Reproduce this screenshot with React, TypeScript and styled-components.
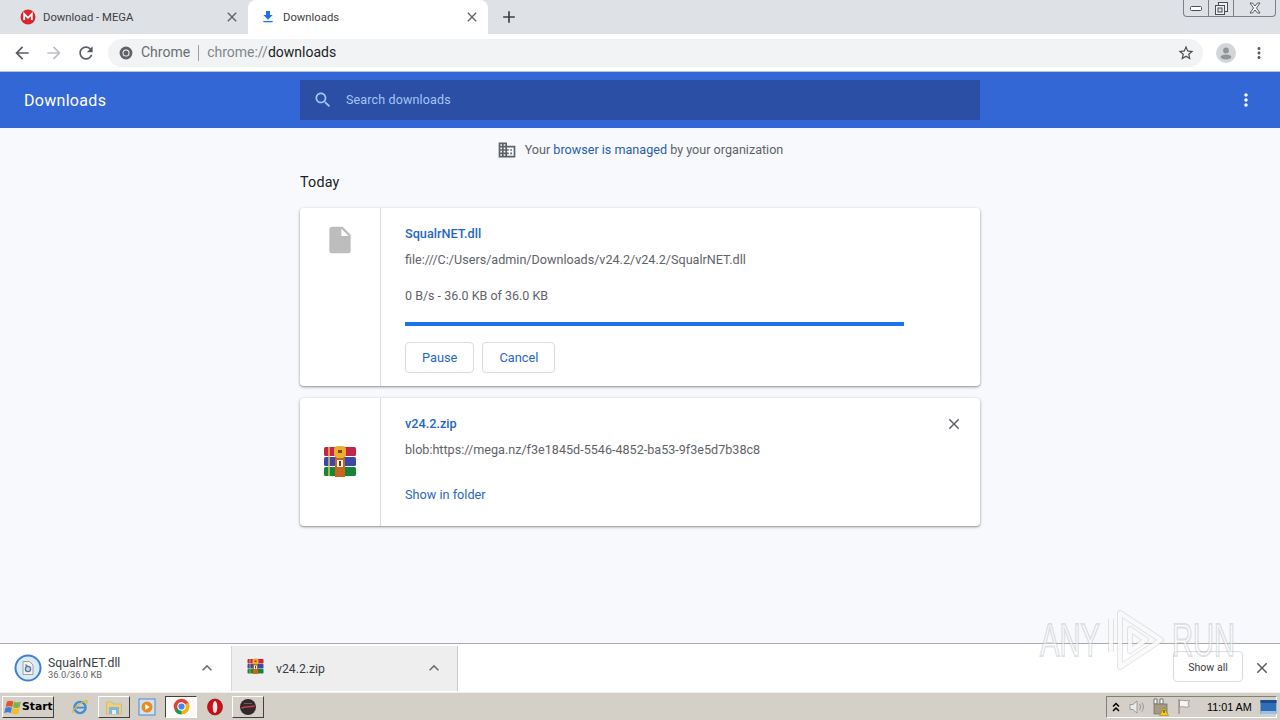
import React from "react";
import styled, { createGlobalStyle } from "styled-components";

const GlobalStyle = createGlobalStyle`
  html, body {
    margin: 0;
    padding: 0;
    width: 1280px;
    height: 720px;
    overflow: hidden;
    font-family: Roboto, "Liberation Sans", sans-serif;
  }
  * { box-sizing: border-box; }
`;

const Page = styled.div`
  position: relative;
  width: 1280px;
  height: 720px;
  display: flex;
  flex-direction: column;
  background: #f7f9fc;
`;

/* ---- tab strip ---- */
const TabStrip = styled.div`
  position: relative;
  height: 34px;
  flex: none;
  background: #dee1e6;
  display: flex;
  align-items: flex-end;
  padding-left: 8px;
`;

const Tab = styled.div<{ $active?: boolean }>`
  width: 240px;
  height: 34px;
  display: flex;
  align-items: center;
  padding: 0 8px 0 12px;
  background: ${(p) => (p.$active ? "#fff" : "transparent")};
  border-radius: 8px 8px 0 0;
  font-size: 11.3px;
  color: #3c4043;
  gap: 7px;
`;

const TabTitle = styled.span`
  flex: 1;
  white-space: nowrap;
`;

const NewTab = styled.div`
  width: 42px;
  display: flex;
  justify-content: center;
  align-self: center;
`;

const WindowButtons = styled.div`
  position: absolute;
  top: 0;
  right: 4px;
  width: 93px;
  height: 17px;
  display: flex;
  border: 1px solid #7d8187;
  border-top: none;
  border-radius: 0 0 4px 4px;
`;

const WindowButton = styled.div<{ $w: number; $last?: boolean }>`
  width: ${(p) => p.$w}px;
  display: flex;
  align-items: center;
  justify-content: center;
  border-right: ${(p) => (p.$last ? "none" : "1px solid #7d8187")};
`;

/* ---- toolbar ---- */
const Toolbar = styled.div`
  height: 38px;
  flex: none;
  background: #fff;
  border-bottom: 1px solid #b8c4dc;
  display: flex;
  align-items: center;
  padding-left: 6px;
`;

const NavButton = styled.div`
  width: 32px;
  flex: none;
  display: flex;
  justify-content: center;
`;

const Omnibox = styled.div`
  width: 1095px;
  height: 28px;
  flex: none;
  margin-left: 6px;
  background: #f1f3f4;
  border-radius: 14px;
  display: flex;
  align-items: center;
  padding: 0 8px 0 11px;
  font-size: 14px;
  color: #696e73;
`;

const OmniLabel = styled.span`
  margin: 0 0 2px 8px;
`;

const OmniDivider = styled.span`
  width: 1px;
  height: 16px;
  background: #9aa0a6;
  margin: 0 8px;
`;

const UrlHost = styled.span`
  flex: 1;
  margin-bottom: 2px;
  color: #80868b;
  & > b {
    font-weight: 400;
    color: #202124;
  }
`;

const Avatar = styled.div`
  width: 20px;
  height: 20px;
  flex: none;
  margin-left: 13px;
  border-radius: 50%;
  background: #d3d5d8;
  display: flex;
  align-items: center;
  justify-content: center;
  overflow: hidden;
`;

const DotsWrap = styled.div`
  margin-left: 14px;
  display: flex;
`;

/* ---- downloads header ---- */
const Header = styled.div`
  height: 56px;
  flex: none;
  background: #3367d6;
  display: flex;
  align-items: center;
  padding: 0 24px;
  color: #fff;
`;

const HeaderTitle = styled.div`
  width: 276px;
  font-size: 16px;
  line-height: 20px;
  padding-top: 1px;
  font-weight: 400;
  letter-spacing: 0.3px;
`;

const SearchBox = styled.div`
  width: 680px;
  height: 40px;
  background: #2a4fa5;
  display: flex;
  align-items: center;
  padding: 0 12px 1px 13px;
  gap: 13px;
  color: #a6c4f8;
  font-size: 12.5px;
  letter-spacing: 0.15px;
`;

const HeaderMenu = styled.div`
  margin-left: auto;
  display: flex;
`;

/* ---- main list ---- */
const Main = styled.div`
  flex: 1;
  display: flex;
  flex-direction: column;
  align-items: center;
  min-height: 0;
`;

const ManagedNote = styled.div`
  height: 43px;
  display: flex;
  align-items: center;
  gap: 8px;
  font-size: 12.6px;
  color: #5f6368;
  & > span > a {
    color: #2a5db0;
  }
`;

const Column = styled.div`
  width: 680px;
`;

const DayLabel = styled.div`
  font-size: 14.3px;
  color: #202124;
  height: 37px;
  padding-top: 3px;
  letter-spacing: 0.2px;
`;

const Card = styled.div<{ $h: number }>`
  position: relative;
  height: ${(p) => p.$h}px;
  margin-bottom: 12px;
  background: #fff;
  border-radius: 4px;
  box-shadow: 0 1px 2px rgba(60, 64, 67, 0.45), 0 1px 3px 1px rgba(60, 64, 67, 0.12);
  display: flex;
`;

const IconCol = styled.div<{ $center?: boolean }>`
  width: 81px;
  flex: none;
  border-right: 1px solid #dadce0;
  display: flex;
  justify-content: center;
  align-items: ${(p) => (p.$center ? "center" : "flex-start")};
  padding-top: ${(p) => (p.$center ? "0" : "16px")};
`;

const CardBody = styled.div`
  flex: 1;
  padding: 17px 24px 0;
  display: flex;
  flex-direction: column;
  align-items: flex-start;
`;

const FileName = styled.div`
  font-size: 12.7px;
  line-height: 18px;
  font-weight: 500;
  color: #2567c4;
`;

const Source = styled.div`
  margin-top: 8px;
  font-size: 12.6px;
  line-height: 18px;
  color: #5f6368;
`;

const Progress = styled.div`
  margin-top: 18px;
  font-size: 12.5px;
  line-height: 18px;
  color: #5f6368;
`;

const BarTrack = styled.div`
  margin-top: 17px;
  width: 499px;
  height: 4px;
  background: #1a73e8;
`;

const Actions = styled.div`
  display: flex;
  gap: 8px;
  margin-top: 16px;
`;

const OutlineButton = styled.div`
  height: 31px;
  padding: 0 16px;
  border: 1px solid #dadce0;
  border-radius: 4px;
  background: #fff;
  display: flex;
  align-items: center;
  font-size: 12.8px;
  font-weight: 400;
  color: #2568c4;
`;

const FolderLink = styled.div`
  margin-top: 27px;
  font-size: 12.7px;
  line-height: 18px;
  color: #2a66c0;
`;

const DismissButton = styled.div`
  position: absolute;
  top: 17px;
  right: 17px;
  display: flex;
`;

/* ---- download shelf ---- */
const Shelf = styled.div`
  height: 49px;
  flex: none;
  background: #fff;
  border-top: 1px solid #a9abad;
  display: flex;
  align-items: center;
  position: relative;
`;

const ShelfItem = styled.div<{ $hover?: boolean }>`
  width: ${(p) => (p.$hover ? "227px" : "231px")};
  height: ${(p) => (p.$hover ? "45px" : "48px")};
  display: flex;
  align-items: center;
  background: ${(p) => (p.$hover ? "#eeeeee" : "#fff")};
  border-right: ${(p) => (p.$hover ? "1px solid #c9c9c9" : "none")};
  border-left: ${(p) => (p.$hover ? "1px solid #d8d8d8" : "none")};
  padding: ${(p) => (p.$hover ? "0 13px 0 15px" : "0 14px 0 14px")};
`;

const ShelfText = styled.div`
  flex: 1;
  display: flex;
  flex-direction: column;
  margin-left: 6px;
  padding-top: 1px;
`;

const ShelfName = styled.div`
  font-size: 12.2px;
  line-height: 13px;
  color: #3c4043;
`;

const ShelfSub = styled.div`
  font-size: 9.3px;
  line-height: 10px;
  color: #5f6368;
`;

const ShelfSingle = styled.div`
  flex: 1;
  margin-left: 12px;
  padding-top: 2px;
  font-size: 12.25px;
  color: #3c4043;
`;

const ShelfRarSlot = styled.div`
  display: flex;
  margin-bottom: 4px;
`;

const ShowAll = styled.div`
  margin-left: auto;
  margin-bottom: 3px;
  width: 70px;
  height: 31px;
  display: flex;
  align-items: center;
  justify-content: center;
  padding-top: 1px;
  border: 1px solid #dadce0;
  border-radius: 4px;
  font-size: 10.6px;
  color: #3c4043;
`;

const ShelfClose = styled.div`
  width: 37px;
  display: flex;
  justify-content: center;
  margin-bottom: 1px;
`;

/* ---- classic style taskbar ---- */
const Taskbar = styled.div`
  height: 28px;
  flex: none;
  background: #d4d0c8;
  border-top: 1px solid #f4f2ec;
  display: flex;
  align-items: center;
  padding: 0 3px 0 2px;
`;

const StartButton = styled.div`
  width: 52px;
  height: 22px;
  display: flex;
  align-items: center;
  padding-left: 1px;
  background: #d4d0c8;
  border: 1px solid;
  border-color: #fff #404040 #404040 #fff;
  font-family: "DejaVu Sans", sans-serif;
  font-size: 10.8px;
  font-weight: 700;
  color: #000;
`;

const QuickLaunch = styled.div`
  margin-left: 10px;
  display: flex;
  align-items: center;
  gap: 1.7px;
`;

const TaskButton = styled.div<{ $state?: "raised" | "pressed" | "flat" }>`
  width: 32px;
  height: 22px;
  display: flex;
  align-items: center;
  justify-content: center;
  border: 1px solid;
  border-color: ${(p) =>
    p.$state === "raised"
      ? "#fff #404040 #404040 #fff"
      : p.$state === "pressed"
      ? "#404040 #fff #fff #404040"
      : "transparent"};
  background: ${(p) => (p.$state === "pressed" ? "#fbfaf8" : "#d4d0c8")};
`;

const Tray = styled.div`
  margin-left: auto;
  width: 171px;
  height: 22px;
  border: 1px solid;
  border-color: #808080 #fff #fff #808080;
  display: flex;
  align-items: center;
  gap: 6px;
  padding-left: 3px;
`;

const TrayClock = styled.div`
  margin: 0 2px 0 7px;
  font-family: "Liberation Sans", sans-serif;
  font-size: 10.8px;
  color: #000;
  white-space: nowrap;
`;

/* ---- watermark over the page ---- */
const Watermark = styled.div`
  position: absolute;
  left: 1040px;
  top: 610px;
  width: 192px;
  height: 60px;
  display: flex;
  align-items: center;
  pointer-events: none;
`;

const MarkWord = styled.span`
  display: block;
  width: 60px;
  font-family: "Liberation Sans", sans-serif;
  font-size: 47px;
  line-height: 36px;
  white-space: nowrap;
  transform: scaleX(0.62);
  transform-origin: left center;
  color: rgba(255, 255, 255, 0.5);
  -webkit-text-stroke: 2px rgba(150, 155, 160, 0.3);
`;

const MarkPlay = styled.div`
  display: flex;
  margin: 0 7px 0 8px;
`;

const Glyph = ({ d, size = 24, color = "#5f6368" }: { d: string; size?: number; color?: string }) => (
  <svg width={size} height={size} viewBox="0 0 24 24" fill={color} style={{ display: "block", flex: "none" }}>
    <path d={d} />
  </svg>
);

const icons = {
  back: "M20 11H7.83l5.59-5.59L12 4l-8 8 8 8 1.41-1.41L7.83 13H20v-2z",
  forward: "M12 4l-1.41 1.41L16.17 11H4v2h12.17l-5.58 5.59L12 20l8-8z",
  reload:
    "M17.65 6.35C16.2 4.9 14.21 4 12 4c-4.42 0-7.99 3.58-7.99 8s3.57 8 7.99 8c3.73 0 6.84-2.55 7.73-6h-2.08c-.82 2.33-3.04 4-5.65 4-3.31 0-6-2.69-6-6s2.69-6 6-6c1.66 0 3.14.69 4.22 1.78L13 11h7V4l-2.35 2.35z",
  star:
    "M22 9.24l-7.19-.62L12 2 9.19 8.63 2 9.24l5.46 4.73L5.82 21 12 17.27 18.18 21l-1.63-7.03L22 9.24zM12 15.4l-3.76 2.27 1-4.28-3.32-2.88 4.38-.38L12 6.1l1.71 4.04 4.38.38-3.32 2.88 1 4.28L12 15.4z",
  search:
    "M15.5 14h-.79l-.28-.27C15.41 12.59 16 11.11 16 9.5 16 5.91 13.09 3 9.5 3S3 5.91 3 9.5 5.91 16 9.5 16c1.61 0 3.09-.59 4.23-1.57l.27.28v.79l5 4.99L20.49 19l-4.99-5zm-6 0C7.01 14 5 11.99 5 9.5S7.01 5 9.5 5 14 7.01 14 9.5 11.99 14 9.5 14z",
  building:
    "M12 7V3H2v18h20V7H12zM6 19H4v-2h2v2zm0-4H4v-2h2v2zm0-4H4V9h2v2zm0-4H4V5h2v2zm4 12H8v-2h2v2zm0-4H8v-2h2v2zm0-4H8V9h2v2zm0-4H8V5h2v2zm10 12h-8v-2h2v-2h-2v-2h2v-2h-2V9h8v10zm-2-8h-2v2h2v-2zm0 4h-2v2h2v-2z",
  file: "M6 2c-1.1 0-1.99.9-1.99 2L4 20c0 1.1.89 2 1.99 2H18c1.1 0 2-.9 2-2V8l-6-6H6zm7 7V3.5L18.5 9H13z",
  download: "M19 9h-4V3H9v6H5l7 7 7-7zM5 18v2h14v-2H5z",
  close:
    "M19 6.41L17.59 5 12 10.59 6.41 5 5 6.41 10.59 12 5 17.59 6.41 19 12 13.41 17.59 19 19 17.59 13.41 12z",
  plus: "M19 13h-6v6h-2v-6H5v-2h6V5h2v6h6v2z",
  dots:
    "M12 8c1.1 0 2-.9 2-2s-.9-2-2-2-2 .9-2 2 .9 2 2 2zm0 2c-1.1 0-2 .9-2 2s.9 2 2 2 2-.9 2-2-.9-2-2-2zm0 6c-1.1 0-2 .9-2 2s.9 2 2 2 2-.9 2-2-.9-2-2-2z",
  chevron: "M7.41 15.41L12 10.83l4.59 4.58L18 14l-6-6-6 6z",
};

const MegaIcon = () => (
  <svg width="16" height="16" viewBox="0 0 16 16" style={{ flex: "none" }}>
    <circle cx="8" cy="8" r="7.5" fill="#d9272e" />
    <path d="M4.2 11V5l3.8 3.8L11.8 5v6" fill="none" stroke="#fff" strokeWidth="1.8" />
  </svg>
);

const ChromeMark = ({ size = 14, mono }: { size?: number; mono?: boolean }) => (
  <svg width={size} height={size} viewBox="0 0 24 24" style={{ flex: "none" }}>
    <circle cx="12" cy="12" r="11" fill={mono ? "#5f6368" : "#db4437"} />
    {!mono && <path d="M12 12 2.5 17.5A11 11 0 0 0 12 23l5-11z" fill="#0f9d58" />}
    {!mono && <path d="M12 12l9.5-5.500A11 11 0 0 1 12 23z" fill="#f4b400" />}
    <circle cx="12" cy="12" r="6" fill="#fff" />
    <circle cx="12" cy="12" r="4.400" fill={mono ? "#5f6368" : "#4285f4"} />
  </svg>
);

const AvatarFigure = () => (
  <svg width="20" height="20" viewBox="0 0 20 20">
    <circle cx="10" cy="7.400" r="2.900" fill="#8f9499" />
    <ellipse cx="10" cy="14" rx="5.400" ry="2.600" fill="#8f9499" />
  </svg>
);

const WinRarIcon = ({ size = 34 }: { size?: number }) => (
  <svg width={size} height={size} viewBox="0 0 34 34" style={{ flex: "none", display: "block" }}>
    <rect x="1" y="2" width="32" height="9" rx="1.500" fill="#c2264b" />
    <rect x="1" y="12" width="32" height="9" rx="1.500" fill="#3b4aa8" />
    <rect x="1" y="22" width="32" height="9" rx="1.500" fill="#15853a" />
    <rect x="5" y="2" width="2" height="29" fill="#e9c75a" opacity="0.7" />
    <rect x="11" y="1" width="12" height="12" rx="4" fill="#eeae2c" />
    <rect x="12" y="13" width="10" height="19" fill="#c9651c" />
    <rect x="14" y="15" width="6" height="7" fill="#fff7e0" />
    <rect x="16" y="16" width="2" height="5" fill="#6b3510" />
    <rect x="15" y="5" width="4" height="3" fill="#7a4a10" />
  </svg>
);

const ShelfFileIcon = () => (
  <svg width="28" height="28" viewBox="0 0 28 28" style={{ flex: "none" }}>
    <circle cx="14" cy="14" r="12.500" fill="#dcebf8" stroke="#3f80d5" strokeWidth="2" />
    <path d="M9 7.500h6.500l3.500 3.500v9.500H9z" fill="#f5f2e6" stroke="#8a8f96" strokeWidth="0.800" />
    <circle cx="14" cy="15" r="2.600" fill="#c9d8ea" stroke="#5477a6" strokeWidth="1.300" />
    <path d="M11.500 10.500l2 2" stroke="#5477a6" strokeWidth="1.200" />
  </svg>
);

const WinFlag = () => (
  <svg width="18" height="18" viewBox="0 0 18 18" style={{ flex: "none" }}>
    <path d="M3 3.500C5 2.500 7 2.600 9.500 3.600L8.200 9C6 8 4 8 1.600 9z" fill="#e2552b" />
    <path d="M10.200 3.800c2.200.9 4.200.9 6.600-.1L15.600 9.200c-2.300 1-4.400 1-6.700.1z" fill="#7cb342" />
    <path d="M1.400 9.800c2.200-1 4.600-1 6.600 0L6.800 15c-2-1-4-1-6.600 0z" fill="#3d7fd6" />
    <path d="M8.700 10c2.200.9 4.500.9 6.800-.1L14.400 15.400c-2.300 1-4.700 1-7 .1z" fill="#f6bd1f" />
  </svg>
);

const IeIcon = () => (
  <svg width="18" height="18" viewBox="0 0 18 18">
    <circle cx="9" cy="9.500" r="5.600" fill="none" stroke="#3d8fd9" strokeWidth="2.400" />
    <path d="M4 9.600h10.400" stroke="#3d8fd9" strokeWidth="1.800" />
    <path d="M2 15c-1-2 4-9 13-12.500 1.500 0 1.500 2-.4 3.400" fill="none" stroke="#e6b23a" strokeWidth="1.300" />
  </svg>
);

const FolderIcon = () => (
  <svg width="18" height="18" viewBox="0 0 18 18">
    <path d="M1.500 4h5.500l1.500 2H16.500v10h-15z" fill="#efcf7a" stroke="#d0b263" strokeWidth="0.700" />
    <rect x="4" y="9" width="10" height="7" fill="#7db9dc" />
    <rect x="7" y="12" width="4" height="4" fill="#e7f0f5" />
  </svg>
);

const PlayerIcon = () => (
  <svg width="18" height="18" viewBox="0 0 18 18">
    <rect x="1" y="1" width="16" height="16" fill="#cfe3f7" stroke="#4a8ccc" />
    <circle cx="9" cy="9" r="5.500" fill="#ee8a1d" />
    <path d="M7.300 6l4.400 3-4.400 3z" fill="#fff" />
  </svg>
);

const OperaIcon = () => (
  <svg width="18" height="18" viewBox="0 0 18 18">
    <ellipse cx="9" cy="9" rx="7.500" ry="8" fill="#cc0f16" stroke="#7a0a0e" strokeWidth="0.600" />
    <ellipse cx="9" cy="9" rx="2.300" ry="6" fill="#f7e9e9" />
  </svg>
);

const DarkAppIcon = () => (
  <svg width="18" height="18" viewBox="0 0 18 18">
    <circle cx="9" cy="9" r="8" fill="#33282c" />
    <path d="M2.500 10c3-1.500 8-1 13-2" fill="none" stroke="#c5404a" strokeWidth="1.400" />
    <path d="M5 5.500h8" stroke="#6a5b60" strokeWidth="1" />
  </svg>
);

const TrayArrows = () => (
  <svg width="12" height="14" viewBox="0 0 12 14" style={{ flex: "none" }}>
    <path d="M3 6.500 6 3.500l3 3M3 11 6 8l3 3" fill="none" stroke="#000" strokeWidth="1.500" />
  </svg>
);

const Speaker = () => (
  <svg width="18" height="16" viewBox="0 0 18 16" style={{ flex: "none" }}>
    <path d="M2 5.500h3L9 2v12l-4-3.500H2z" fill="#ececec" stroke="#8a8a8a" strokeWidth="0.800" />
    <path d="M11.500 5c1.300 2 1.300 4 0 6M13.800 3.500c2 2.700 2 6.300 0 9" fill="none" stroke="#8a8a8a" strokeWidth="0.900" />
  </svg>
);

const NetworkTray = () => (
  <svg width="18" height="18" viewBox="0 0 18 18" style={{ flex: "none" }}>
    <path d="M2 1h3v5H2zM8 1h3v5H8z" fill="#fff" stroke="#555" strokeWidth="0.800" />
    <rect x="2" y="6" width="13" height="10" fill="#a89a80" stroke="#6a6a6a" strokeWidth="0.700" />
    <path d="M12 9.500l4.500 8h-9z" fill="#f4cc1e" stroke="#8a7410" strokeWidth="0.500" />
    <rect x="11.500" y="12" width="1" height="3" fill="#222" />
  </svg>
);

const FlagTray = () => (
  <svg width="18" height="17" viewBox="0 0 18 17" style={{ flex: "none" }}>
    <path d="M3 1v15" stroke="#8a8a8a" strokeWidth="1.200" />
    <path d="M3.500 2.500c3-1 5 1 10 0l-1.500 3.500 1.500 2.500c-4 1.500-7-.5-10 .5z" fill="#f6f5f1" stroke="#8a8a8a" strokeWidth="0.800" />
  </svg>
);

const DesktopTray = () => (
  <svg width="17" height="16" viewBox="0 0 17 16" style={{ flex: "none" }}>
    <rect x="0.500" y="1" width="16" height="14" fill="#2f6fb8" />
    <rect x="0.500" y="1" width="16" height="3" fill="#1c4c8c" />
    <rect x="0.500" y="12" width="16" height="3" fill="#9cc0e0" />
  </svg>
);

const MinIcon = () => (
  <svg width="12" height="7" viewBox="0 0 12 7">
    <rect x="0.500" y="1.500" width="11" height="4" rx="1" fill="#fff" stroke="#4a4d52" />
  </svg>
);

const RestoreIcon = () => (
  <svg width="13" height="13" viewBox="0 0 13 13">
    <rect x="3.500" y="0.500" width="9" height="9" fill="#eef0f2" stroke="#4a4d52" />
    <rect x="0.500" y="3.500" width="9" height="9" fill="#eef0f2" stroke="#4a4d52" />
    <rect x="3" y="6" width="4" height="4" fill="#dee1e6" stroke="#4a4d52" />
  </svg>
);

const CloseWinIcon = () => (
  <svg width="14" height="12" viewBox="0 0 14 12">
    <path d="M2 1h2.500L7 4l2.500-3H12L8.500 6l3.500 5H9.500L7 8l-2.500 3H2l3.500-5z" fill="#f4f5f6" stroke="#4a4d52" strokeWidth="0.900" />
  </svg>
);

// the ribbon triangle between ANY and RUN
const PlayMark = () => (
  <svg width="57" height="60" viewBox="0 0 57 60" fill="none">
    <g stroke="rgba(150,155,160,0.25)" strokeWidth="6" strokeLinejoin="round">
      <path d="M12 3 53 30 12 57Z" />
      <path d="M22 19 38 30 22 41Z" />
      <path d="M3 9V42" />
    </g>
    <g stroke="rgba(255,255,255,0.8)" strokeWidth="4" strokeLinejoin="round">
      <path d="M12 3 53 30 12 57Z" />
      <path d="M22 19 38 30 22 41Z" />
      <path d="M3 9V42" />
    </g>
  </svg>
);

export default function App() {
  return (
    <Page>
      <GlobalStyle />
      <TabStrip>
        <Tab>
          <MegaIcon />
          <TabTitle>Download - MEGA</TabTitle>
          <Glyph d={icons.close} size={16} />
        </Tab>
        <Tab $active>
          <Glyph d={icons.download} size={16} color="#1a73e8" />
          <TabTitle>Downloads</TabTitle>
          <Glyph d={icons.close} size={16} />
        </Tab>
        <NewTab>
          <Glyph d={icons.plus} size={20} color="#3c4043" />
        </NewTab>
        <WindowButtons>
          <WindowButton $w={25}>
            <MinIcon />
          </WindowButton>
          <WindowButton $w={25}>
            <RestoreIcon />
          </WindowButton>
          <WindowButton $w={41} $last>
            <CloseWinIcon />
          </WindowButton>
        </WindowButtons>
      </TabStrip>

      <Toolbar>
        <NavButton>
          <Glyph d={icons.back} size={20} color="#5a5e63" />
        </NavButton>
        <NavButton>
          <Glyph d={icons.forward} size={20} color="#bdc1c6" />
        </NavButton>
        <NavButton>
          <Glyph d={icons.reload} size={20} color="#5a5e63" />
        </NavButton>
        <Omnibox>
          <ChromeMark mono />
          <OmniLabel>Chrome</OmniLabel>
          <OmniDivider />
          <UrlHost>
            chrome://<b>downloads</b>
          </UrlHost>
          <Glyph d={icons.star} size={18} color="#4a4d52" />
        </Omnibox>
        <Avatar>
          <AvatarFigure />
        </Avatar>
        <DotsWrap>
          <Glyph d={icons.dots} size={18} color="#5a5e63" />
        </DotsWrap>
      </Toolbar>

      <Header>
        <HeaderTitle>Downloads</HeaderTitle>
        <SearchBox>
          <Glyph d={icons.search} size={20} color="#a6c4f8" />
          Search downloads
        </SearchBox>
        <HeaderMenu>
          <Glyph d={icons.dots} size={20} color="#fff" />
        </HeaderMenu>
      </Header>

      <Main>
        <ManagedNote>
          <Glyph d={icons.building} size={20} color="#5f6368" />
          <span>
            Your <a>browser is managed</a> by your organization
          </span>
        </ManagedNote>
        <Column>
          <DayLabel>Today</DayLabel>
          <Card $h={178}>
            <IconCol>
              <Glyph d={icons.file} size={32} color="#bdbdbd" />
            </IconCol>
            <CardBody>
              <FileName>SqualrNET.dll</FileName>
              <Source>file:///C:/Users/admin/Downloads/v24.2/v24.2/SqualrNET.dll</Source>
              <Progress>0 B/s - 36.0 KB of 36.0 KB</Progress>
              <BarTrack />
              <Actions>
                <OutlineButton>Pause</OutlineButton>
                <OutlineButton>Cancel</OutlineButton>
              </Actions>
            </CardBody>
          </Card>
          <Card $h={128}>
            <IconCol $center>
              <WinRarIcon />
            </IconCol>
            <CardBody>
              <FileName>v24.2.zip</FileName>
              <Source>blob:https://mega.nz/f3e1845d-5546-4852-ba53-9f3e5d7b38c8</Source>
              <FolderLink>Show in folder</FolderLink>
            </CardBody>
            <DismissButton>
              <Glyph d={icons.close} size={18} />
            </DismissButton>
          </Card>
        </Column>
      </Main>

      <Shelf>
        <ShelfItem>
          <ShelfFileIcon />
          <ShelfText>
            <ShelfName>SqualrNET.dll</ShelfName>
            <ShelfSub>36.0/36.0 KB</ShelfSub>
          </ShelfText>
          <Glyph d={icons.chevron} size={20} color="#6a6e73" />
        </ShelfItem>
        <ShelfItem $hover>
          <ShelfRarSlot>
            <WinRarIcon size={17} />
          </ShelfRarSlot>
          <ShelfSingle>v24.2.zip</ShelfSingle>
          <Glyph d={icons.chevron} size={20} color="#6a6e73" />
        </ShelfItem>
        <ShowAll>Show all</ShowAll>
        <ShelfClose>
          <Glyph d={icons.close} size={18} color="#5a5e63" />
        </ShelfClose>
      </Shelf>

      <Taskbar>
        <StartButton>
          <WinFlag />
          Start
        </StartButton>
        <QuickLaunch>
          <TaskButton $state="flat">
            <IeIcon />
          </TaskButton>
          <TaskButton $state="raised">
            <FolderIcon />
          </TaskButton>
          <TaskButton $state="flat">
            <PlayerIcon />
          </TaskButton>
          <TaskButton $state="pressed">
            <ChromeMark size={17} />
          </TaskButton>
          <TaskButton $state="flat">
            <OperaIcon />
          </TaskButton>
          <TaskButton $state="raised">
            <DarkAppIcon />
          </TaskButton>
        </QuickLaunch>
        <Tray>
          <TrayArrows />
          <Speaker />
          <NetworkTray />
          <FlagTray />
          <TrayClock>11:01 AM</TrayClock>
          <DesktopTray />
        </Tray>
      </Taskbar>

      <Watermark>
        <MarkWord>ANY</MarkWord>
        <MarkPlay>
          <PlayMark />
        </MarkPlay>
        <MarkWord>RUN</MarkWord>
      </Watermark>
    </Page>
  );
}
